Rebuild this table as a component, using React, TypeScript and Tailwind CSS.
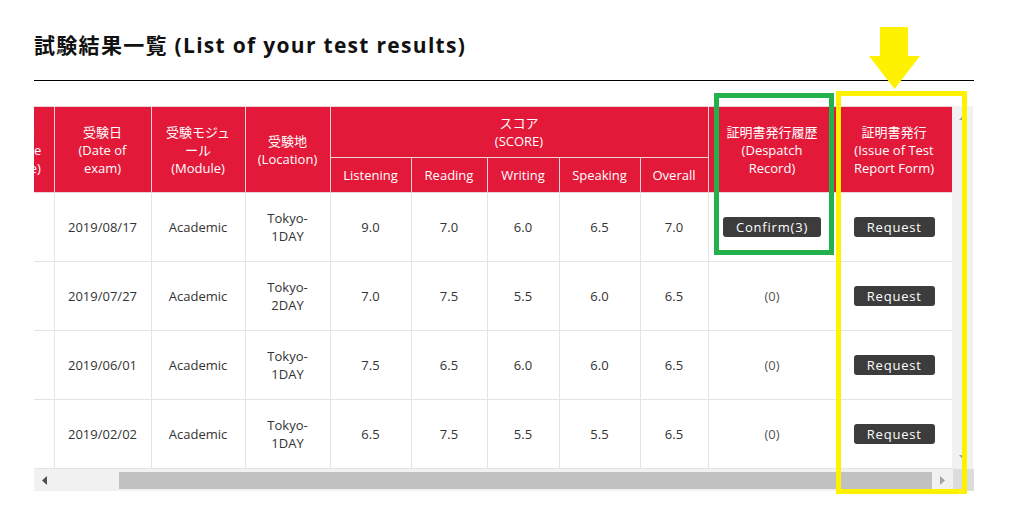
import React from 'react';

const FONT = "font-['Open_Sans','Noto_Sans_CJK_JP',sans-serif]";

const rows = [
  { date: '2019/08/17', loc: 'Tokyo-\n1DAY', scores: ['9.0', '7.0', '6.0', '6.5', '7.0'], sent: 3 },
  { date: '2019/07/27', loc: 'Tokyo-\n2DAY', scores: ['7.0', '7.5', '5.5', '6.0', '6.5'], sent: 0 },
  { date: '2019/06/01', loc: 'Tokyo-\n1DAY', scores: ['7.5', '6.5', '6.0', '6.0', '6.5'], sent: 0 },
  { date: '2019/02/02', loc: 'Tokyo-\n1DAY', scores: ['6.5', '7.5', '5.5', '5.5', '6.5'], sent: 0 },
];

const th = 'border border-[#ecd3d6] bg-[#e3193a] text-white font-normal text-center align-middle px-1';
const td = 'border border-[#e4e4e4] text-center align-middle px-1 whitespace-pre-line';

function DarkButton({ label }: { label: string }) {
  return (
    <span className="inline-flex items-center justify-center h-[20px] px-[13px] rounded-[3px] bg-[#3c3c3c] text-white text-[13px] tracking-[0.8px]">
      {label}
    </span>
  );
}

const App: React.FC = () => {
  return (
    <div className={`relative w-[1015px] h-[513px] bg-white overflow-hidden ${FONT}`}>
      <div className="pl-[34px] pr-[41px] pt-[31px]">
        <h1 className="text-[21px] leading-[28px] font-bold tracking-[1.3px] text-[#111]">
          試験結果一覧 (List of your test results)
        </h1>
        <div className="mt-[21px] border-t border-black" />

        <div className="mt-[25px] flex flex-col">
          <div className="flex">
            <div className="w-[918px] overflow-hidden">
              <table className="table-fixed border-collapse w-[918px] text-[13px] leading-[18px] text-[#333]">
                <colgroup>
                  <col className="w-[20px]" />
                  <col className="w-[97px]" />
                  <col className="w-[94px]" />
                  <col className="w-[85px]" />
                  <col className="w-[81px]" />
                  <col className="w-[76px]" />
                  <col className="w-[72px]" />
                  <col className="w-[81px]" />
                  <col className="w-[68px]" />
                  <col className="w-[128px]" />
                  <col className="w-[116px]" />
                </colgroup>
                <thead>
                  <tr className="h-[51px]">
                    <th rowSpan={2} className={`${th} border-l-0 overflow-hidden px-0`}>
                      <div className="w-[99px] -ml-[79px] text-center">受験番号<br />(Candidate<br />Reference)</div>
                    </th>
                    <th rowSpan={2} className={th}>受験日<br />(Date of<br />exam)</th>
                    <th rowSpan={2} className={th}>受験モジュ<br />ール<br />(Module)</th>
                    <th rowSpan={2} className={th}>受験地<br />(Location)</th>
                    <th colSpan={5} className={th}>スコア<br />(SCORE)</th>
                    <th rowSpan={2} className={th}>証明書発行履歴<br />(Despatch<br />Record)</th>
                    <th rowSpan={2} className={th}>証明書発行<br />(Issue of Test<br />Report Form)</th>
                  </tr>
                  <tr className="h-[35px]">
                    {['Listening', 'Reading', 'Writing', 'Speaking', 'Overall'].map((s) => (
                      <th key={s} className={th}>{s}</th>
                    ))}
                  </tr>
                </thead>
                <tbody>
                  {rows.map((r) => (
                    <tr key={r.date} className="h-[69px]">
                      <td className={`${td} border-l-0`} />
                      <td className={td}>{r.date}</td>
                      <td className={td}>Academic</td>
                      <td className={td}>{r.loc}</td>
                      {r.scores.map((s, i) => (
                        <td key={i} className={td}>{s}</td>
                      ))}
                      <td className={td}>
                        {r.sent > 0 ? <DarkButton label={`Confirm(${r.sent})`} /> : <span className="text-[#555]">(0)</span>}
                      </td>
                      <td className={`${td} border-r-0`}>
                        <DarkButton label="Request" />
                      </td>
                    </tr>
                  ))}
                </tbody>
              </table>
            </div>
            {/* vertical scrollbar */}
            <div className="w-[21px] bg-[#f1f1f1] flex flex-col items-center justify-between pt-[10px] pb-[10px]">
              <svg width="7" height="4" viewBox="0 0 7 4"><polygon points="3.5,0 7,4 0,4" fill="#a3a3a3" /></svg>
              <svg width="7" height="4" viewBox="0 0 7 4"><polygon points="0,0 7,0 3.5,4" fill="#a3a3a3" /></svg>
            </div>
          </div>
          {/* horizontal scrollbar */}
          <div className="flex h-[22px]">
            <div className="flex-1 bg-[#f1f1f1] flex items-center">
              <div className="w-[21px] flex items-center justify-center">
                <svg width="5" height="9" viewBox="0 0 5 9"><polygon points="5,0 5,9 0,4.5" fill="#505050" /></svg>
              </div>
              <div className="w-[64px]" />
              <div className="flex-1 h-[17px] bg-[#c1c1c1]" />
              <div className="w-[21px] flex items-center justify-center">
                <svg width="5" height="9" viewBox="0 0 5 9"><polygon points="0,0 5,4.5 0,9" fill="#a3a3a3" /></svg>
              </div>
            </div>
            <div className="w-[21px] bg-[#dcdcdc]" />
          </div>
        </div>
      </div>

      {/* annotations */}
      <div className="absolute left-[714px] top-[93px] w-[120px] h-[162px] border-[5px] border-[#22b14c]" />
      <div className="absolute left-[836px] top-[91px] w-[131px] h-[403px] border-[5px] border-[#fff200]" />
      <svg className="absolute left-[869px] top-[27px]" width="51" height="62" viewBox="0 0 51 62">
        <polygon points="11,0 39,0 39,29 51,29 25.5,62 0,29 11,29" fill="#fff200" />
      </svg>
    </div>
  );
};

export default App;
